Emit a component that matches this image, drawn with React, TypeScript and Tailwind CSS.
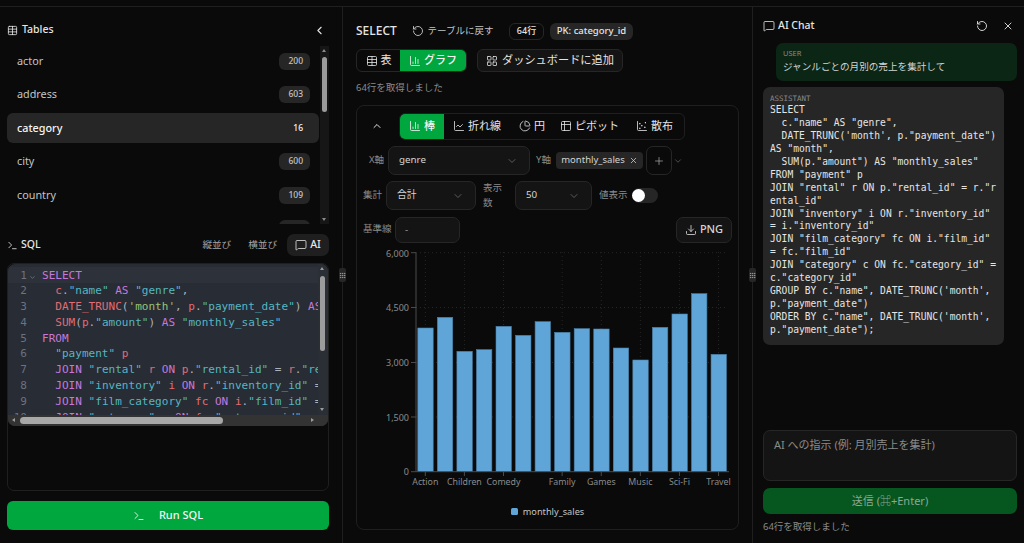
import React from "react";
import { Table, ChevronLeft, Terminal, MessageSquare, RotateCcw, ChartColumn, LayoutGrid, ChartLine, ChartPie, Table2, ChartScatter, ChevronUp, ChevronDown, Plus, X, Download, Grip } from "lucide-react";

const K = ({ children }: { children: React.ReactNode }) => <span className="text-[#c678dd]">{children}</span>;
const R = ({ children }: { children: React.ReactNode }) => <span className="text-[#e06c75]">{children}</span>;
const S = ({ children }: { children: React.ReactNode }) => <span className="text-[#56b6c2]">{children}</span>;
const G = ({ children }: { children: React.ReactNode }) => <span className="text-[#98c379]">{children}</span>;

const tables = [
  ["actor", "200"],
  ["address", "603"],
  ["category", "16"],
  ["city", "600"],
  ["country", "109"],
  ["customer", "599"],
];

const code: React.ReactNode[] = [
  <><K>SELECT</K></>,
  <>  <R>c</R>.<S>"name"</S> <K>AS</K> <S>"genre"</S>,</>,
  <>  <R>DATE_TRUNC</R>(<G>'month'</G>, <R>p</R>.<S>"payment_date"</S>) <K>AS</K> <S>"month"</S>,</>,
  <>  <R>SUM</R>(<R>p</R>.<S>"amount"</S>) <K>AS</K> <S>"monthly_sales"</S></>,
  <><K>FROM</K></>,
  <>  <S>"payment"</S> <R>p</R></>,
  <>  <K>JOIN</K> <S>"rental"</S> <R>r</R> <K>ON</K> <R>p</R>.<S>"rental_id"</S> = <R>r</R>.<S>"rental_id"</S></>,
  <>  <K>JOIN</K> <S>"inventory"</S> <R>i</R> <K>ON</K> <R>r</R>.<S>"inventory_id"</S> = <R>i</R>.<S>"inventory_id"</S></>,
  <>  <K>JOIN</K> <S>"film_category"</S> <R>fc</R> <K>ON</K> <R>i</R>.<S>"film_id"</S> = <R>fc</R>.<S>"film_id"</S></>,
  <>  <K>JOIN</K> <S>"category"</S> <R>c</R> <K>ON</K> <R>fc</R>.<S>"category_id"</S> = <R>c</R>.<S>"category_id"</S></>,
];

const assistant = `SELECT
  c."name" AS "genre",
  DATE_TRUNC('month', p."payment_date")
AS "month",
  SUM(p."amount") AS "monthly_sales"
FROM "payment" p
JOIN "rental" r ON p."rental_id" = r."r
ental_id"
JOIN "inventory" i ON r."inventory_id"
= i."inventory_id"
JOIN "film_category" fc ON i."film_id"
= fc."film_id"
JOIN "category" c ON fc."category_id" =
c."category_id"
GROUP BY c."name", DATE_TRUNC('month',
p."payment_date")
ORDER BY c."name", DATE_TRUNC('month',
p."payment_date");`;

const barTops = [264, 232, 334, 329, 259, 286, 245, 277, 266, 267, 324, 360, 262, 222, 161, 343];
const xTicks: [number, string][] = [[0, "Action"], [2, "Children"], [4, "Comedy"], [7, "Family"], [9, "Games"], [11, "Music"], [13, "Sci-Fi"], [15, "Travel"]];
const yTicks: [number, string, number][] = [[252.7, "6,000", 256.5], [307.5, "4,500", 311], [362.5, "3,000", 366], [417, "1,500", 420.5], [471.7, "0", 475]];

function Handle() {
  return (
    <div className="absolute right-[-4px] top-[261px] z-10 flex h-[14px] w-[7px] items-center justify-center rounded-[2px] bg-[#262626] text-[#b0b0b0]">
      <Grip size={7} strokeWidth={2} />
    </div>
  );
}

function Chart() {
  return (
    <svg viewBox="357 250 381 248" className="block h-[248px] w-[381px]">
      {yTicks.slice(0, 4).map(([y]) => (
        <line key={y} x1={416} x2={728} y1={y} y2={y} stroke="#262626" strokeDasharray="1 3" />
      ))}
      {xTicks.map(([i]) => (
        <line key={i} x1={425.3 + 19.55 * i} x2={425.3 + 19.55 * i} y1={252} y2={471} stroke="#262626" strokeDasharray="1 3" />
      ))}
      {barTops.map((t, i) => {
        const top = 240 + t / 3;
        return <rect key={i} x={417.8 + 19.55 * i} y={top} width={15.4} height={471.7 - top} fill="#60a5d8" stroke="#4a7fa5" strokeWidth={0.6} />;
      })}
      <path d="M416 252.7V471.7H729" fill="none" stroke="#4b4b4b" strokeWidth={1} />
      {yTicks.map(([y, l, ty]) => (
        <g key={l}>
          <line x1={411} x2={416} y1={y} y2={y} stroke="#4b4b4b" />
          <text x={409} y={ty} textAnchor="end" fontSize={9} fill="#8a8a8a">{l}</text>
        </g>
      ))}
      {xTicks.map(([i, l]) => (
        <g key={l}>
          <line x1={425.3 + 19.55 * i} x2={425.3 + 19.55 * i} y1={472} y2={476} stroke="#4b4b4b" />
          <text x={425.3 + 19.55 * i} y={484.5} textAnchor="middle" fontSize={8.8} fill="#8a8a8a">{l}</text>
        </g>
      ))}
    </svg>
  );
}

export default function App() {
  return (
    <div className="flex h-[543px] w-[1024px] flex-col overflow-hidden bg-[#0a0a0a] font-['Noto_Sans','Noto_Sans_CJK_JP',sans-serif] text-[#e5e5e5]">
      <div className="h-[7px] shrink-0 border-b border-[#1f1f1f]" />
      <div className="flex min-h-0 flex-1">
        {/* Left */}
        <div className="relative flex w-[343px] shrink-0 flex-col border-r border-[#1f1f1f] pl-[7px] pr-[13px]">
          <div className="mt-[16px] flex h-[14px] items-center gap-[4px] text-[10.5px] font-medium">
            <Table size={11} strokeWidth={1.8} />
            <span>Tables</span>
            <ChevronLeft size={13} strokeWidth={2} className="ml-auto mr-[3px]" />
          </div>
          <div className="mt-[9px] flex h-[178px] gap-[1px] overflow-hidden">
            <div className="h-full flex-1 overflow-hidden">
              {tables.map(([n, c]) => {
                const active = n === "category";
                return (
                  <div key={n} className={`mb-[3.5px] flex h-[30px] items-center justify-between rounded-[6px] pl-[10px] pr-[9px] text-[10.8px] ${active ? "bg-[#262626] font-medium text-[#f5f5f5]" : "text-[#c4c4c4]"}`}>
                    <span>{n}</span>
                    <span className={`flex h-[17px] w-[31px] items-center justify-end rounded-[6px] pr-[7px] text-[8.5px] font-medium ${active ? "" : "bg-[#262626]"}`}>{c}</span>
                  </div>
                );
              })}
            </div>
            <div className="relative h-full w-[9px] shrink-0 bg-[#161616]">
              <div className="absolute left-[2px] top-[11px] h-[55px] w-[5px] rounded-full bg-[#9c9c9c]" />
              <div className="absolute left-[2px] top-[3px] h-0 w-0 border-x-[2.5px] border-b-[3px] border-x-transparent border-b-[#8a8a8a]" />
              <div className="absolute bottom-[3px] left-[2px] h-0 w-0 border-x-[2.5px] border-t-[3px] border-x-transparent border-t-[#8a8a8a]" />
            </div>
          </div>
          <div className="mt-[10px] flex h-[22px] items-center text-[10.5px] font-medium">
            <Terminal size={11} strokeWidth={1.8} />
            <span className="ml-[3px]">SQL</span>
            <span className="ml-auto text-[9.6px] font-normal text-[#a3a3a3]">縦並び</span>
            <span className="ml-[17px] text-[9.6px] font-normal text-[#a3a3a3]">横並び</span>
            <span className="ml-[10px] flex h-[22px] w-[42px] items-center justify-center gap-[3px] rounded-[7px] bg-[#1f1f1f]">
              <MessageSquare size={12} strokeWidth={1.6} />
              AI
            </span>
          </div>
          <div className="mt-[7px] h-[228px] rounded-[7px] border border-[#1f1f1f]">
            <div className="relative h-[162px] overflow-hidden rounded-[7px] bg-[#282c34] font-['DejaVu_Sans_Mono',monospace] text-[11.05px] leading-[15.8px] text-[#abb2bf]">
              <div className="absolute left-0 right-[10px] top-[3px] h-[16px] bg-[#2c313a]" />
              <div className="relative flex pt-[3.5px]">
                <div className="w-[19px] shrink-0 text-right text-[#6b7280]">
                  {code.map((_, i) => <div key={i}>{i + 1}</div>)}
                </div>
                <div className="w-[8px] shrink-0 text-[#8b93a1]"><ChevronDown size={7} strokeWidth={2} className="ml-[2px] mt-[6px]" /></div>
                <div className="ml-[7px] w-[276px] overflow-hidden whitespace-pre">
                  {code.map((c, i) => <div key={i}>{c}</div>)}
                </div>
              </div>
              <div className="absolute bottom-0 right-0 top-0 w-[10px] bg-[#2a2e35]">
                <div className="absolute left-[2px] top-[3px] h-0 w-0 border-x-[2.5px] border-b-[3px] border-x-transparent border-b-[#9c9c9c]" />
                <div className="absolute left-[2px] top-[12px] h-[75px] w-[5px] rounded-full bg-[#9c9c9c]" />
                <div className="absolute bottom-[15px] left-[2px] h-0 w-0 border-x-[2.5px] border-t-[3px] border-x-transparent border-t-[#9c9c9c]" />
              </div>
              <div className="absolute bottom-0 left-0 right-0 h-[11px] bg-[#333333]">
                <div className="absolute left-[4px] top-[3px] h-0 w-0 border-y-[2.5px] border-r-[3px] border-y-transparent border-r-[#9c9c9c]" />
                <div className="absolute left-[12px] top-[2px] h-[7px] w-[203px] rounded-full bg-[#a8a8a8]" />
                <div className="absolute right-[14px] top-[3px] h-0 w-0 border-y-[2.5px] border-l-[3px] border-y-transparent border-l-[#9c9c9c]" />
              </div>
            </div>
          </div>
          <div className="mt-[10px] flex h-[29px] items-center justify-center gap-[14px] rounded-[6px] bg-[#00a63e] text-[11px] font-medium text-[#f5f5f5]">
            <Terminal size={12} strokeWidth={1.8} />
            <span>Run SQL</span>
          </div>
          <Handle />
        </div>

        {/* Center */}
        <div className="relative flex w-[410px] shrink-0 flex-col border-r border-[#1f1f1f] pl-[13px] pr-[13px]">
          <div className="mt-[15px] flex h-[18px] items-center text-[12px]">
            <span className="w-[41px] font-medium">SELECT</span>
            <RotateCcw size={12} strokeWidth={1.7} className="ml-[14.5px] text-[#d4d4d4]" />
            <span className="ml-[4px] w-[66px] whitespace-nowrap text-[9.5px] text-[#c4c4c4]">テーブルに戻す</span>
            <span className="ml-[15.5px] flex h-[17px] w-[35px] items-center justify-center rounded-[6px] border border-[#262626] text-[9px] font-medium">64行</span>
            <span className="ml-[6px] flex h-[17px] w-[83px] items-center justify-center rounded-[6px] bg-[#262626] text-[9.5px] font-medium">PK: category_id</span>
          </div>
          <div className="mt-[9px] flex h-[23px] items-stretch text-[11px]">
            <div className="flex overflow-hidden rounded-[6px] border border-[#262626]">
              <span className="flex w-[43px] items-center justify-center gap-[3px]"><Table size={12} strokeWidth={1.6} />表</span>
              <span className="flex w-[66px] items-center justify-center gap-[3px] bg-[#00a63e] font-medium text-[#f5f5f5]"><ChartColumn size={12} strokeWidth={1.6} />グラフ</span>
            </div>
            <span className="ml-[10px] flex w-[146px] items-center justify-center gap-[4px] rounded-[6px] border border-[#262626] bg-[#141414] whitespace-nowrap text-[11.2px]"><LayoutGrid size={12} strokeWidth={1.6} />ダッシュボードに追加</span>
          </div>
          <div className="mt-[9px] h-[14px] text-[9.5px] leading-[14px] text-[#8a8a8a]">64行を取得しました</div>
          <div className="mt-[10px] h-[425px] rounded-[8px] border border-[#1f1f1f]">
            <div className="mt-[7px] flex h-[26px] items-center text-[11px]">
              <ChevronUp size={12} strokeWidth={2} className="ml-[14px]" />
              <div className="ml-[16px] flex h-[27px] overflow-hidden rounded-[6px] border border-[#1f1f1f]">
                <span className="flex w-[44px] items-center justify-center gap-[3px] bg-[#00a63e] font-medium text-[#f5f5f5]"><ChartColumn size={12} strokeWidth={1.6} />棒</span>
                <span className="flex w-[66px] items-center justify-center gap-[3px]"><ChartLine size={12} strokeWidth={1.6} />折れ線</span>
                <span className="flex w-[44px] items-center justify-center gap-[3px]"><ChartPie size={12} strokeWidth={1.6} />円</span>
                <span className="flex w-[71px] items-center justify-center gap-[3px]"><Table2 size={12} strokeWidth={1.6} />ピボット</span>
                <span className="flex w-[59px] items-center justify-center gap-[3px]"><ChartScatter size={12} strokeWidth={1.6} />散布</span>
              </div>
            </div>
            <div className="mt-[7px] flex h-[29px] items-center text-[9.5px] text-[#8a8a8a]">
              <span className="ml-[12px] w-[18px]">X軸</span>
              <div className="ml-[1px] flex h-[29px] w-[142px] items-center justify-between rounded-[7px] border border-[#262626] bg-[#141414] pl-[10px] pr-[11px] text-[9.8px] text-[#d4d4d4]">genre<ChevronDown size={12} strokeWidth={1.5} className="text-[#737373]" /></div>
              <span className="ml-[6px] w-[18px]">Y軸</span>
              <span className="ml-[2px] flex h-[17px] w-[87px] items-center justify-center gap-[4px] rounded-[4px] bg-[#262626] text-[9.5px] text-[#d4d4d4]">monthly_sales<X size={9} strokeWidth={2} /></span>
              <span className="ml-[3px] flex h-[29px] w-[26px] items-center justify-center rounded-[7px] border border-[#262626] text-[#a3a3a3]"><Plus size={12} strokeWidth={1.5} /></span>
              <ChevronDown size={10} strokeWidth={1.5} className="ml-[1px] text-[#737373]" />
            </div>
            <div className="mt-[6px] flex h-[29px] items-center text-[9.5px] text-[#8a8a8a]">
              <span className="ml-[6px] w-[22px]">集計</span>
              <div className="ml-[1px] flex h-[29px] w-[90px] items-center justify-between rounded-[7px] border border-[#262626] bg-[#141414] pl-[10px] pr-[11px] text-[9.8px] text-[#d4d4d4]">合計<ChevronDown size={12} strokeWidth={1.5} className="text-[#737373]" /></div>
              <span className="ml-[7px] w-[28px]">表示数</span>
              <div className="ml-[4px] flex h-[29px] w-[77px] items-center justify-between rounded-[7px] border border-[#262626] bg-[#141414] pl-[10px] pr-[11px] text-[9.8px] text-[#d4d4d4]">50<ChevronDown size={12} strokeWidth={1.5} className="text-[#737373]" /></div>
              <span className="ml-[7px] w-[29px]">値表示</span>
              <span className="ml-[4px] flex h-[15px] w-[26px] items-center rounded-full bg-[#262626]"><span className="h-[13px] w-[13px] rounded-full bg-white" /></span>
            </div>
            <div className="mt-[6px] flex h-[27px] items-center text-[9.5px] text-[#8a8a8a]">
              <span className="ml-[6px] w-[29px]">基準線</span>
              <div className="ml-[3px] flex h-[26px] w-[65px] items-center rounded-[7px] border border-[#262626] bg-[#141414] pl-[9px] text-[10px]">-</div>
              <span className="ml-auto mr-[6px] flex h-[26px] w-[56px] items-center justify-center gap-[3px] rounded-[7px] border border-[#262626] bg-[#141414] text-[11px] font-medium text-[#d4d4d4]"><Download size={12} strokeWidth={1.7} />PNG</span>
            </div>
            <div className="mt-[7px]"><Chart /></div>
            <div className="mt-[7px] flex items-center justify-center gap-[5px] text-[9.2px] text-[#c4c4c4]">
              <span className="h-[7px] w-[7px] rounded-[1.5px] bg-[#60a5d8]" />monthly_sales
            </div>
          </div>
          <Handle />
        </div>

        {/* Right */}
        <div className="relative flex min-w-0 flex-1 flex-col pl-[10px] pr-[7px]">
          <div className="mt-[12px] flex h-[14px] items-center gap-[3px] text-[10.5px] font-medium">
            <MessageSquare size={12} strokeWidth={1.6} />
            <span>AI Chat</span>
            <RotateCcw size={12} strokeWidth={1.8} className="ml-auto" />
            <X size={12} strokeWidth={1.8} className="ml-[11px] mr-[3px]" />
          </div>
          <div className="ml-[13px] mt-[10px] h-[38px] rounded-[7px] bg-[#0b2615] px-[7px] pt-[5px]">
            <div className="text-[7.5px] leading-[11px] text-[#8a8a8a]">USER</div>
            <div className="text-[9.6px] leading-[15px] text-[#d4d4d4]">ジャンルごとの月別の売上を集計して</div>
          </div>
          <div className="mt-[6px] mr-[13px] h-[258px] rounded-[7px] bg-[#262626] px-[7px] pt-[6px]">
            <div className="font-['DejaVu_Sans_Mono',monospace] text-[7.5px] leading-[11px] text-[#8a8a8a]">ASSISTANT</div>
            <pre className="font-['DejaVu_Sans_Mono',monospace] text-[9.65px] leading-[12.93px] text-[#e5e5e5]">{assistant}</pre>
          </div>
          <div className="mt-[85px] flex h-[51px] rounded-[7px] border border-[#262626] bg-[#141414] px-[10px] pt-[6px] text-[11px] text-[#8a8a8a]">AI への指示 (例: 月別売上を集計)</div>
          <div className="mt-[7px] flex h-[26px] items-center justify-center rounded-[7px] bg-[#05561f] text-[11px] text-[#8aa894]">送信 (⌘+Enter)</div>
          <div className="mt-[6px] text-[9.5px] leading-[13px] text-[#8a8a8a]">64行を取得しました</div>
        </div>
      </div>
    </div>
  );
}
